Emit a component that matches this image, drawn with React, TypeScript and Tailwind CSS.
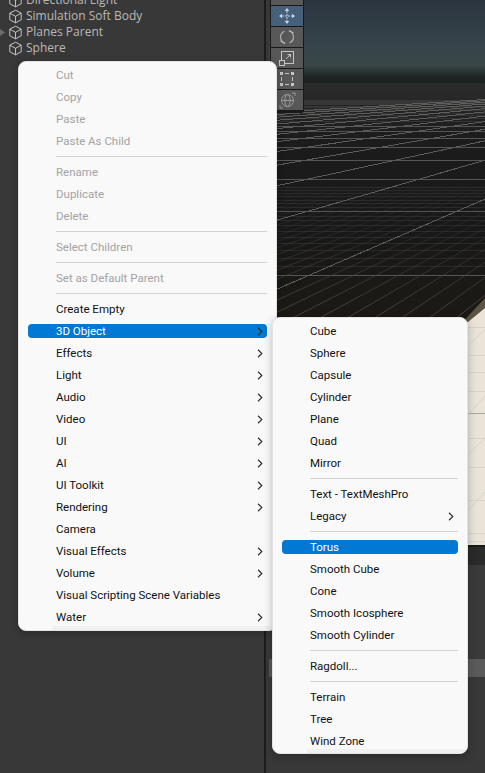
import React from "react";

type Row = { t?: string; d?: boolean; sub?: boolean; hl?: boolean; sep?: boolean };

const main: Row[] = [
  { t: "Cut", d: true }, { t: "Copy", d: true }, { t: "Paste", d: true }, { t: "Paste As Child", d: true }, { sep: true },
  { t: "Rename", d: true }, { t: "Duplicate", d: true }, { t: "Delete", d: true }, { sep: true },
  { t: "Select Children", d: true }, { sep: true },
  { t: "Set as Default Parent", d: true }, { sep: true },
  { t: "Create Empty" }, { t: "3D Object", sub: true, hl: true }, { t: "Effects", sub: true }, { t: "Light", sub: true },
  { t: "Audio", sub: true }, { t: "Video", sub: true }, { t: "UI", sub: true }, { t: "AI", sub: true },
  { t: "UI Toolkit", sub: true }, { t: "Rendering", sub: true }, { t: "Camera" }, { t: "Visual Effects", sub: true },
  { t: "Volume", sub: true }, { t: "Visual Scripting Scene Variables" }, { t: "Water", sub: true },
];

const sub: Row[] = [
  { t: "Cube" }, { t: "Sphere" }, { t: "Capsule" }, { t: "Cylinder" }, { t: "Plane" }, { t: "Quad" }, { t: "Mirror" }, { sep: true },
  { t: "Text - TextMeshPro" }, { t: "Legacy", sub: true }, { sep: true },
  { t: "Torus", hl: true }, { t: "Smooth Cube" }, { t: "Cone" }, { t: "Smooth Icosphere" }, { t: "Smooth Cylinder" }, { sep: true },
  { t: "Ragdoll..." }, { sep: true },
  { t: "Terrain" }, { t: "Tree" }, { t: "Wind Zone" },
];

function Chevron() {
  return (
    <svg width="6" height="9" viewBox="0 0 6 9" fill="none" className="shrink-0">
      <path d="M1 0.8 L4.8 4.5 L1 8.2" stroke="#333333" strokeWidth="1.2" />
    </svg>
  );
}

function Menu({ rows, className }: { rows: Row[]; className: string }) {
  return (
    <div className={className} style={{ fontFamily: 'Roboto, "Open Sans", sans-serif' }}>
      {rows.map((r, i) =>
        r.sep ? (
          <div key={i} className="h-[9px] flex items-center pl-[37px] pr-[9px]">
            <div className="h-px w-full bg-[#d2d2d2]" />
          </div>
        ) : (
          <div
            key={i}
            className={
              "relative h-[22px] flex items-center pl-[37px] pr-[13px] text-[11.5px] leading-none" +
              (r.hl ? " text-white" : r.d ? " text-[#a3a3a3]" : " text-[#111111]")
            }
          >
            {r.hl ? <div className="absolute left-[9px] right-[9px] top-[4px] h-[14px] rounded-[4px] bg-[#0078d4]" /> : null}
            <span className="relative flex-1 whitespace-nowrap pt-[1px]">{r.t}</span>
            {r.sub ? (
              <span className="relative">
                <Chevron />
              </span>
            ) : null}
          </div>
        )
      )}
      <div className="absolute left-[34px] right-0 bottom-0 h-[4px] bg-[#f0f0f0]" />
    </div>
  );
}

function Cube() {
  return (
    <svg width="15" height="15" viewBox="0 0 15 15" fill="none" stroke="#c4c4c4" strokeWidth="1" className="shrink-0">
      <path d="M7.5 1.2 L13.2 4.2 V10.8 L7.5 13.8 L1.8 10.8 V4.2 Z" />
      <path d="M1.8 4.2 L7.5 7.3 L13.2 4.2 M7.5 7.3 V13.8" />
    </svg>
  );
}

function Hier({ t, arrow }: { t: string; arrow?: boolean }) {
  return (
    <div className="h-[16px] flex items-center relative pl-[8px] gap-[3px] text-[12px] text-[#b8b8b8]">
      {arrow ? (
        <svg width="5" height="7" viewBox="0 0 5 7" className="absolute left-0 top-[5px]">
          <path d="M0 0 L5 3.5 L0 7 Z" fill="#6c6c6c" />
        </svg>
      ) : null}
      <Cube />
      <span className="whitespace-nowrap">{t}</span>
    </div>
  );
}

function Tool({ active, children }: { active?: boolean; children: React.ReactNode }) {
  return (
    <div className={"w-[32px] h-[20px] flex items-center justify-center " + (active ? "bg-[#46607c]" : "bg-[#585858]")}>
      {children}
    </div>
  );
}

const OX = 269;
const VX = 753 - OX;
const VY = 83;

function Scene() {
  const hor: { y: number; color: string; op: number }[] = [];
  for (let m = 21; m < 38; m++) {
    if (m % 10 !== 0) hor.push({ y: Math.round(VY + 1 / (0.00026 * m)), color: "#3d3c39", op: 0.5 });
  }
  for (let n = 2; n <= 22; n++) {
    const y = Math.round(VY + 1 / (0.0026 * n));
    hor.push({ y, color: "#5c5c5a", op: n < 10 ? 0.9 : 0.3 });
  }
  const diagMinor: number[] = [];
  for (let k = -60; k <= 40; k++) {
    if (k % 10 !== 0) diagMinor.push(312 - OX + 22.2 * k);
  }
  const diagMajor: number[] = [];
  for (let k = -12; k <= 4; k++) diagMajor.push(312 - OX + 222 * k);
  const end = (bx: number) => {
    const t = (330 - VY) / (274 - VY);
    return { x: VX + (bx - VX) * t, y: 330 };
  };
  const plane = [327, 355, 372, 391, 438, 467, 500, 533, 541];
  return (
    <svg width="216" height="545" viewBox="0 0 216 545" className="absolute inset-0">
      <defs>
        <linearGradient id="sky" x1="0" y1="0" x2="0" y2="1">
          <stop offset="0" stopColor="#2b3540" />
          <stop offset="0.55" stopColor="#37444a" />
          <stop offset="0.78" stopColor="#3a4646" />
          <stop offset="0.93" stopColor="#1e2424" />
          <stop offset="1" stopColor="#1e2020" />
        </linearGradient>
        <linearGradient id="floor" x1="0" y1="0" x2="0" y2="1">
          <stop offset="0" stopColor="#2c2c2c" />
          <stop offset="0.22" stopColor="#1c1c1c" />
          <stop offset="0.6" stopColor="#181818" />
          <stop offset="1" stopColor="#1d1a14" />
        </linearGradient>
        <linearGradient id="fade" gradientUnits="userSpaceOnUse" x1="0" y1="170" x2="0" y2="320">
          <stop offset="0" stopColor="#3a3936" stopOpacity="0" />
          <stop offset="1" stopColor="#4a4843" stopOpacity="0.9" />
        </linearGradient>
      </defs>
      <rect x="0" y="0" width="216" height="83" fill="url(#sky)" />
      <rect x="0" y="83" width="216" height="250" fill="url(#floor)" />
      {hor.map((h, i) => (
        <line key={i} x1="0" x2="216" y1={h.y + 0.5} y2={h.y + 0.5} stroke={h.color} strokeWidth="1" opacity={h.op} />
      ))}
      {diagMinor.map((bx, i) => {
        const e = end(bx);
        return <line key={i} x1={VX} y1={VY} x2={e.x} y2={e.y} stroke="url(#fade)" strokeWidth="1" />;
      })}
      {diagMajor.map((bx, i) => {
        const e = end(bx);
        return <line key={i} x1={VX} y1={VY} x2={e.x} y2={e.y} stroke="#5c5c5a" strokeWidth="1" shapeRendering="crispEdges" />;
      })}
      <polygon points="190,326 216,298 216,312 199,326" fill="#6b6350" opacity="0.8" />
      <polygon points="216,308 199,322 0,322 0,545 216,545" fill="#e9e3d8" />
      {plane.map((y) => (
        <line key={y} x1="0" x2="216" y1={y + 0.5} y2={y + 0.5} stroke="#d9d3c7" strokeWidth="1" />
      ))}
      <line x1="0" x2="216" y1="413.5" y2="413.5" stroke="#aaa69c" strokeWidth="1" />
      <path d="M199 345 L216 330 M199 415 L216 396 M199 455 L216 438 M199 510 L216 492" stroke="#d9d3c7" strokeWidth="1" />
    </svg>
  );
}

export default function App() {
  return (
    <div className="relative w-[485px] h-[773px] overflow-hidden flex bg-[#383838]" style={{ fontFamily: '"Open Sans", "Noto Sans", sans-serif' }}>
      <div className="w-[264px] h-full bg-[#383838] shrink-0">
        <div className="-mt-[8px]">
          <Hier t="Directional Light" />
          <Hier t="Simulation Soft Body" />
          <Hier t="Planes Parent" arrow />
          <Hier t="Sphere" />
        </div>
      </div>
      <div className="w-[2px] h-full bg-[#1c1c1c] shrink-0" />
      <div className="w-[3px] h-full bg-[#383838] shrink-0" />
      <div className="flex-1 h-full flex flex-col">
        <div className="relative h-[545px] shrink-0 overflow-hidden">
          <Scene />
        </div>
        <div className="h-[2px] bg-[#191919]" />
        <div className="h-[18px] bg-[#2a2a2a]" />
        <div className="h-[94px] bg-[#3a3a3a]" />
        <div className="h-[18px] bg-[#5a5a5a]" />
        <div className="flex-1 bg-[#383838]" />
      </div>

      <div className="absolute left-[270px] -top-[16px] w-[34px] flex flex-col gap-px bg-[#191919] p-px pb-[3px] rounded-b-[3px]">
        <Tool>
          <svg width="12" height="6"><rect x="2" y="0" width="8" height="5" fill="#c4c4c4" /></svg>
        </Tool>
        <Tool active>
          <svg width="16" height="16" viewBox="0 0 16 16" fill="#c6d4e2">
            <path d="M8 0 L10.3 3 H5.7 Z M8 16 L5.7 13 H10.3 Z M0 8 L3 5.7 V10.3 Z M16 8 L13 10.3 V5.7 Z" />
            <path d="M8 3 V13 M3 8 H13" stroke="#c6d4e2" strokeWidth="1" strokeDasharray="2 1" />
          </svg>
        </Tool>
        <Tool>
          <svg width="16" height="16" viewBox="0 0 16 16" fill="none" stroke="#b8b8b8" strokeWidth="1.1">
            <path d="M6.2 14.2 A6.4 6.4 0 0 1 5.4 2.2 M9.8 1.8 A6.4 6.4 0 0 1 10.6 13.8" />
            <path d="M1.5 12 L6 14.5 M14.5 4 L10 1.5" />
          </svg>
        </Tool>
        <Tool>
          <svg width="16" height="16" viewBox="0 0 16 16" fill="none" stroke="#c4c4c4" strokeWidth="1">
            <rect x="2.5" y="1.5" width="12" height="12" />
            <rect x="0.5" y="10.5" width="5" height="5" fill="#585858" />
            <path d="M7 9 L11.5 4.5 M8.5 4.5 H11.5 V7.5" />
          </svg>
        </Tool>
        <Tool>
          <svg width="16" height="16" viewBox="0 0 16 16" fill="#c4c4c4" stroke="none">
            <rect x="1" y="1" width="3" height="3" /><rect x="12" y="1" width="3" height="3" />
            <rect x="1" y="12" width="3" height="3" /><rect x="12" y="12" width="3" height="3" />
            <path d="M6 2 H10 V3 H6 Z M6 13 H10 V14 H6 Z M2 6 H3 V10 H2 Z M13 6 H14 V10 H13 Z" />
          </svg>
        </Tool>
        <Tool>
          <svg width="17" height="17" viewBox="0 0 17 17" fill="none" stroke="#9c9c9c" strokeWidth="1">
            <circle cx="8.5" cy="8.5" r="6" />
            <ellipse cx="8.5" cy="8.5" rx="2.6" ry="6" />
            <path d="M2.5 8.5 H14.5" />
            <path d="M13 1 H16 V4 M1 13 V16 H4" />
          </svg>
        </Tool>
      </div>

      <Menu
        rows={main}
        className="absolute left-[18px] top-[61px] w-[259px] h-[570px] bg-[#f9f9f9] rounded-[8px] border border-[#e4e4e4] pt-[2px] shadow-[0_2px_8px_rgba(0,0,0,0.25)] overflow-hidden"
      />
      <Menu
        rows={sub}
        className="absolute left-[272px] top-[317px] w-[196px] h-[437px] bg-[#f9f9f9] rounded-[8px] border border-[#e4e4e4] pt-[2px] shadow-[0_2px_8px_rgba(0,0,0,0.25)] overflow-hidden"
      />
    </div>
  );
}
